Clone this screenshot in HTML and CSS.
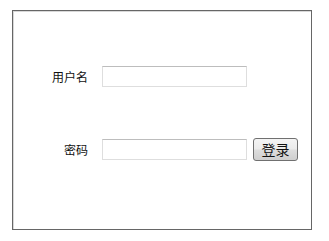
FILE: index.html
```html
<!DOCTYPE html>
<html lang="zh">
<head>
<meta charset="utf-8">
<title>登录</title>
<link rel="stylesheet" href="styles.css">
</head>
<body>
<div class="box">
  <div class="row row-user">
    <label class="label" for="u">用户名</label>
    <input class="field" id="u" type="text">
  </div>
  <div class="row row-pass">
    <label class="label" for="p">密码</label>
    <input class="field" id="p" type="password">
    <button class="btn" type="button">登录</button>
  </div>
</div>
</body>
</html>
```
FILE: styles.css
```css
html, body {
  margin: 0;
  padding: 0;
  background: #ffffff;
}
body {
  font-family: "Noto Sans CJK SC", "Liberation Sans", sans-serif;
  font-size: 12px;
  color: #111111;
}
.box {
  box-sizing: border-box;
  margin: 10px 0 0 12px;
  width: 300px;
  height: 220px;
  border: 1px solid #666666;
  box-shadow: inset 1px 1px 0 #d8d8d8;
  padding-top: 55px;
  display: flex;
  flex-direction: column;
  gap: 51px;
}
.row {
  display: flex;
  align-items: center;
  height: 21px;
}
.row-pass {
  height: 23px;
}
.label {
  width: 75px;
  margin-right: 14px;
  text-align: right;
  line-height: 14px;
}
.field {
  box-sizing: border-box;
  width: 145px;
  height: 21px;
  margin: 0;
  padding: 0 3px;
  border: 1px solid #dedede;
  border-top-color: #bdbdbd;
  background: #ffffff;
  outline: none;
}
.btn {
  box-sizing: border-box;
  margin: 0 0 0 6px;
  width: 45px;
  height: 23px;
  padding: 0;
  border: 1px solid #707070;
  border-radius: 3px;
  background: linear-gradient(#f4f4f4, #ebebeb 48%, #dddddd 52%, #cfcfcf);
  font-family: "Noto Sans CJK SC", sans-serif;
  font-size: 14px;
  line-height: 21px;
  color: #111111;
}
```
